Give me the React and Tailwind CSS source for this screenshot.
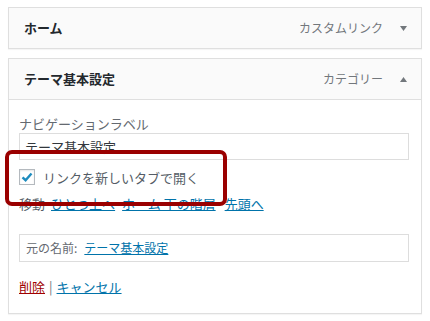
import React from 'react';

const Caret = ({ up }) => (
  <svg width="7" height="5" viewBox="0 0 7 5" className="shrink-0">
    {up ? <polygon points="0,5 7,5 3.5,0" fill="#72777c" /> : <polygon points="0,0 7,0 3.5,5" fill="#72777c" />}
  </svg>
);

const App = () => {
  return (
    <div
      className="relative w-[430px] h-[321px] bg-white pt-[7px] pl-[8px]"
      style={{ fontFamily: '"Noto Sans CJK JP", "Noto Sans", sans-serif' }}
    >
      {/* 閉じた項目 */}
      <div className="w-[414px] h-[42px] border border-[#dfdfdf] bg-[#fafafa] shadow-[0_1px_1px_rgba(0,0,0,0.04)] flex items-center pl-[15px] pr-[14px]">
        <span className="text-[13px] font-bold text-[#23282d] flex-1">ホーム</span>
        <span className="text-[12px] text-[#72777c] mr-[17px]">カスタムリンク</span>
        <Caret />
      </div>

      {/* 開いた項目 */}
      <div className="mt-[9px] w-[414px] h-[256px] border border-[#dfdfdf] bg-white shadow-[0_1px_1px_rgba(0,0,0,0.04)]">
        <div className="h-[41px] bg-[#fafafa] border-b border-[#dfdfdf] flex items-center pl-[15px] pr-[14px]">
          <span className="text-[13px] font-bold text-[#23282d] flex-1">テーマ基本設定</span>
          <span className="text-[12px] text-[#72777c] mr-[17px]">カテゴリー</span>
          <Caret up />
        </div>

        <div className="pl-[10px] pr-[12px] pt-[15px]">
          <label className="block text-[13px] leading-[18px] text-[#646970]">ナビゲーションラベル</label>
          <div className="h-[27px] w-[390px] border border-[#dddddd] flex items-center px-[5px] text-[13px] text-[#32373c]">
            テーマ基本設定
          </div>

          <div className="mt-[8px] flex items-center h-[17px]">
            <span className="w-[16px] h-[16px] border border-[#b4b9be] bg-white flex items-center justify-center shadow-[inset_0_1px_2px_rgba(0,0,0,0.1)]">
              <svg width="12" height="12" viewBox="0 0 12 12">
                <path d="M1.5 6.3 L4.6 9.2 L10.5 2.5" fill="none" stroke="#1e8cbe" strokeWidth="2.4" />
              </svg>
            </span>
            <span className="ml-[8px] text-[13px] text-[#555d66] leading-[18px] pt-[2px]">リンクを新しいタブで開く</span>
          </div>

          <div className="mt-[10px] flex items-center text-[13px] leading-[18px]">
            <span className="text-[#555d66] mr-[6px]">移動</span>
            <a className="text-[#0073aa] underline mr-[7px]">ひとつ上へ</a>
            <a className="text-[#0073aa] underline mr-[9px]">ホーム 下の階層</a>
            <a className="text-[#0073aa] underline">先頭へ</a>
          </div>

          <div className="mt-[21px] h-[28px] w-[390px] border border-[#dddddd] flex items-center pl-[6px] text-[12px]">
            <span className="text-[#646970] mr-[7px]">元の名前:</span>
            <a className="text-[#0073aa] underline">テーマ基本設定</a>
          </div>

          <div className="mt-[16px] flex items-center text-[13px] leading-[18px]">
            <a className="text-[#a00000] underline">削除</a>
            <span className="text-[#72777c] mx-[4px]">|</span>
            <a className="text-[#0073aa] underline">キャンセル</a>
          </div>
        </div>
      </div>

      {/* 強調枠 */}
      <div className="absolute left-[5px] top-[150px] w-[222px] h-[56px] border-[4px] border-[#9a0000] rounded-[7px] pointer-events-none" />
    </div>
  );
};

export default App;
